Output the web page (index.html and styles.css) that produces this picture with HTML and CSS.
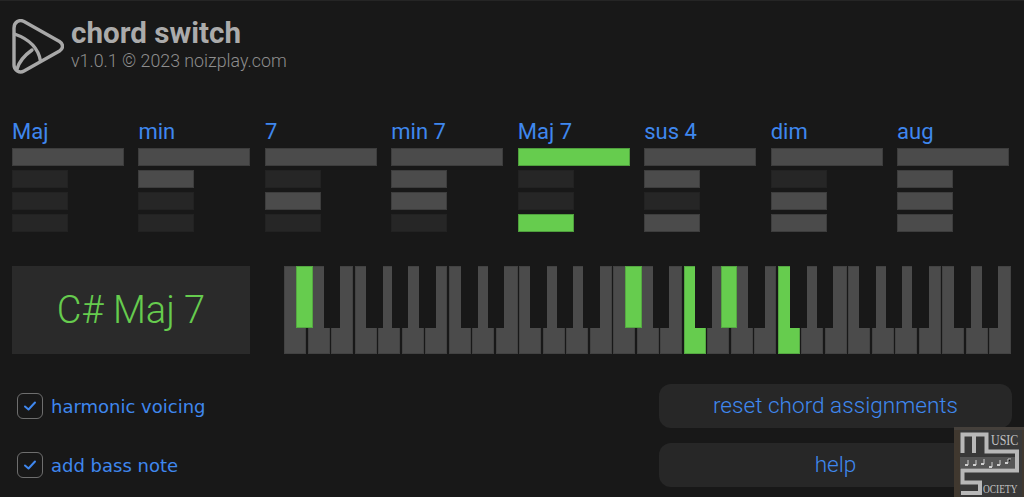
FILE: index.html
```html
<!DOCTYPE html>
<html lang="en">
<head>
<meta charset="utf-8">
<title>chord switch</title>
<link rel="stylesheet" href="styles.css">
</head>
<body>
<div class="app">
  <header class="header">
    <svg class="logo" viewBox="0 0 52 56" fill="none" stroke="#a8a8a8" stroke-width="3.4" stroke-linejoin="round" stroke-linecap="round">
      <path d="M2 9 C2 3 7.5 0 12 2.5 L47.5 22.5 C51.5 25 51.5 29.5 47.5 32 L12 52 C7.5 54.5 2 51.5 2 46 Z"/>
      <path d="M2.5 15 C14 19 26 27 28.5 42"/>
      <path d="M5 50 C7 43 13 36 20 31"/>
    </svg>
    <div class="brand">
      <div class="title">chord switch</div>
      <div class="version">v1.0.1 © 2023 noizplay.com</div>
    </div>
  </header>

  <section class="chords">
    <div class="chord"><div class="chord-name">Maj</div><div class="bar wide on"></div><div class="bar"></div><div class="bar"></div><div class="bar"></div></div>
    <div class="chord"><div class="chord-name">min</div><div class="bar wide on"></div><div class="bar on"></div><div class="bar"></div><div class="bar"></div></div>
    <div class="chord"><div class="chord-name">7</div><div class="bar wide on"></div><div class="bar"></div><div class="bar on"></div><div class="bar"></div></div>
    <div class="chord"><div class="chord-name">min 7</div><div class="bar wide on"></div><div class="bar on"></div><div class="bar on"></div><div class="bar"></div></div>
    <div class="chord"><div class="chord-name">Maj 7</div><div class="bar wide green"></div><div class="bar"></div><div class="bar"></div><div class="bar green"></div></div>
    <div class="chord"><div class="chord-name">sus 4</div><div class="bar wide on"></div><div class="bar on"></div><div class="bar"></div><div class="bar on"></div></div>
    <div class="chord"><div class="chord-name">dim</div><div class="bar wide on"></div><div class="bar"></div><div class="bar on"></div><div class="bar on"></div></div>
    <div class="chord"><div class="chord-name">aug</div><div class="bar wide on"></div><div class="bar on"></div><div class="bar on"></div><div class="bar on"></div></div>
  </section>

  <section class="keyboard-row">
    <div class="chord-display">C# Maj 7</div>
    <div class="piano" id="piano"></div>
  </section>

  <section class="controls">
    <div class="checks">
      <label class="check"><span class="box"><svg viewBox="0 0 14 12" fill="none" stroke="#3f87ee" stroke-width="2" stroke-linecap="round" stroke-linejoin="round"><path d="M2 6.5 L5.5 9.5 L12 2.5"/></svg></span>harmonic voicing</label>
      <label class="check"><span class="box"><svg viewBox="0 0 14 12" fill="none" stroke="#3f87ee" stroke-width="2" stroke-linecap="round" stroke-linejoin="round"><path d="M2 6.5 L5.5 9.5 L12 2.5"/></svg></span>add bass note</label>
    </div>
    <div class="buttons">
      <button class="btn">reset chord assignments</button>
      <button class="btn">help</button>
    </div>
  </section>

  <svg class="badge" viewBox="0 0 70 70">
    <rect width="70" height="70" fill="#383838"/>
    <rect width="6" height="70" fill="#40382f"/>
    <rect x="68" width="2" height="70" fill="#40382f"/>
    <rect width="70" height="3" fill="#45403b"/>
    <rect x="6" y="30" width="55" height="11" fill="#565656"/>
    <path d="M8.5 26 V7.5 H32.5 V24.5 H63 V43.5 H8.5 V55.5 H26 V66 H7 M20 26 V7.5" fill="none" stroke="#b8b8b8" stroke-width="4"/>
    <g fill="#cfcfcf"><rect x="11" y="37" width="3" height="2"/><rect x="19" y="37" width="3" height="2"/><rect x="27" y="36" width="3" height="2"/><rect x="35" y="39" width="3" height="2"/><rect x="43" y="37" width="3" height="2"/><rect x="51" y="35" width="3" height="2"/></g>
    <g stroke="#cfcfcf" stroke-width="1"><path d="M14 38 V33 M22 38 V33 M30 37 V32 M38 40 V35 M46 38 V33 M54 36 V32 H57"/></g>
    <text class="badge-text" transform="translate(37 18) scale(1 1.2)">USIC</text>
    <text class="badge-text small" transform="translate(29 66) scale(1.05 1.4)">OCIETY</text>
  </svg>
</div>
<script src="piano.js"></script>
</body>
</html>
```
FILE: styles.css
```css
* { box-sizing: border-box; }
html, body { margin: 0; height: 100%; }
body { background: #181818; overflow: hidden; font-family: Roboto, "Liberation Sans", sans-serif; }
.app { position: relative; width: 1024px; height: 497px; padding: 20px 12px 0; border-top: 1px solid #252525; }

.header { display: flex; gap: 8px; height: 60px; align-items: flex-start; }
.logo { width: 52px; height: 56px; margin-top: -2px; }
.brand { display: flex; flex-direction: column; margin-left: -1px; }
.title { font-size: 29.6px; line-height: 26px; font-weight: 700; color: #ababab; margin-top: -1px; }
.version { font-size: 17.8px; line-height: 20px; font-weight: 300; color: #8e8e8e; margin-top: 5px; }

.chords { display: flex; gap: 14.45px; margin-top: 38px; }
.chord { width: 112px; display: flex; flex-direction: column; }
.chord-name { font-size: 22px; line-height: 26px; color: #3f87ee; margin-bottom: 3px; }
.bar { width: 56px; height: 18px; margin-bottom: 4px; background: #262626; border: 1px solid #222; }
.bar.wide { width: 112px; }
.bar.on { background: #4b4b4b; border-color: #3d3d3d; }
.bar.green { background: #66cc4e; border-color: #4f9f3d; }

.keyboard-row { display: flex; gap: 34px; margin-top: 30px; }
.chord-display { width: 238px; height: 88px; background: #2a2a2a; color: #66cc4e; font-size: 38px; font-weight: 300; display: flex; align-items: center; justify-content: center; }
.piano { display: flex; gap: 1.5px; }
.key { position: relative; width: 22px; height: 88px; background: #4b4b4b; border: 1px solid #424242; }
.key.active { background: #66cc4e; border-color: #55a842; }
.black { position: absolute; z-index: 1; top: -1px; height: 62px; background: #181818; }
.black.active { background: #66cc4e; border: 1px solid #55a842; }
.black.cs { left: 11px; width: 17px; }
.black.ds { left: 15px; width: 16px; }
.black.fs { left: 10px; width: 17px; }
.black.gs { left: 13px; width: 16px; }
.black.as { left: 16px; width: 17px; }

.controls { display: flex; justify-content: space-between; margin-top: 30px; }
.checks { display: flex; flex-direction: column; gap: 33px; padding: 9px 0 0 5px; }
.check { display: flex; align-items: center; gap: 8px; height: 26px; font-family: "DejaVu Sans", sans-serif; font-size: 18px; color: #3f87ee; }
.box { width: 26px; height: 26px; border: 1.5px solid #6e6e6e; border-radius: 6px; display: flex; align-items: center; justify-content: center; }
.box svg { width: 14px; height: 12px; }
.buttons { display: flex; flex-direction: column; gap: 15px; }
.btn { width: 353px; height: 44px; border: 0; border-radius: 12px; background: #272727; color: #3f87ee; font-family: Roboto, sans-serif; font-size: 22.6px; font-weight: 300; padding: 0 0 2px; }

.badge { position: absolute; right: 0; bottom: 0; width: 70px; height: 70px; }
.badge-text { font-family: "Liberation Serif", serif; font-size: 12px; fill: #c4c4c4; }
.badge-text.small { font-size: 9px; }
```
FILE: piano.js
```js
var piano = document.getElementById('piano');
var blacks = ['cs', 'ds', null, 'fs', 'gs', 'as', null];
var activeWhites = [17, 21];
var activeBlacks = [0, 14, 18];
for (var i = 0; i < 31; i++) {
  var key = document.createElement('div');
  key.className = 'key' + (activeWhites.indexOf(i) >= 0 ? ' active' : '');
  var type = blacks[i % 7];
  if (type && i < 30) {
    var b = document.createElement('div');
    b.className = 'black ' + type + (activeBlacks.indexOf(i) >= 0 ? ' active' : '');
    key.appendChild(b);
  }
  piano.appendChild(key);
}
```
